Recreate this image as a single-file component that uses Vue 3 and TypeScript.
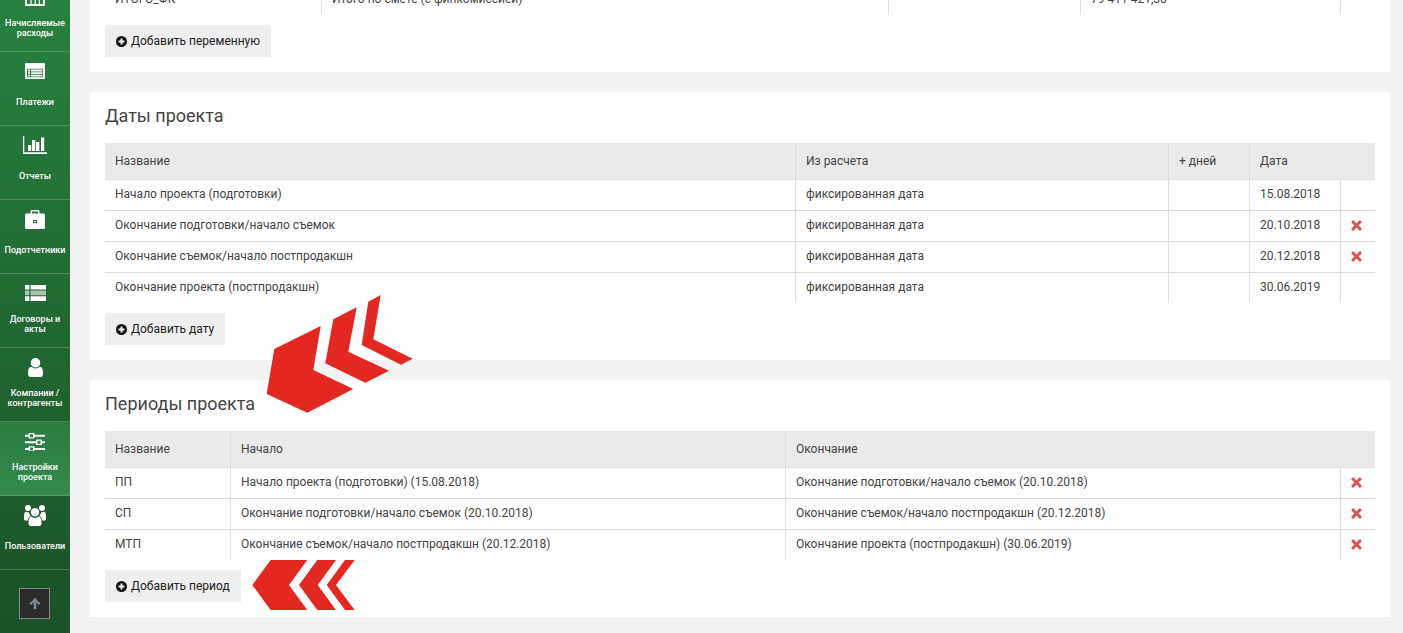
<script setup lang="ts">
interface NavItem { label: string[]; w: number; h: number; d: string; dim?: string; active?: boolean }
const nav: NavItem[] = [
  { label: ['Начисляемые', 'расходы'], w: 20, h: 18, d: 'M1 0h18a1 1 0 0 1 1 1v16a1 1 0 0 1-1 1H1a1 1 0 0 1-1-1V1a1 1 0 0 1 1-1zM2 2v3.7h3.4V2zm4.6 0v3.7h3V2zm4.2 0v3.7h3V2zm4.2 0v3.7H18V2zM2 7v3.7h3.4V7zm4.6 0v3.7h3V7zm4.2 0v3.7h3V7zm4.2 0v3.7H18V7zM2 12v4h3.4v-4zm4.6 0v4h3v-4zm4.2 0v4h3v-4zm4.2 0v4H18v-4z' },
  { label: ['Платежи'], w: 20, h: 16, d: 'M1 0h18a1 1 0 0 1 1 1v14a1 1 0 0 1-1 1H1a1 1 0 0 1-1-1V1a1 1 0 0 1 1-1zM2 5.800v8.500h16V5.800zM3 6.600h2v1.900H3zm3 0h11.300v1.900H6zM3 9.200h2v1.800H3zm3 0h11.300v1.800H6zM3 11.700h2v1.900H3zm3 0h11.300v1.900H6z' },
  { label: ['Отчеты'], w: 24, h: 18, d: 'M0 0h1.300v16.300H24V18H0zM5 9h3.200v6H5zM9 4h3.200v11H9zM13 6h3.400v9H13zM18 1.500h3.200V15H18z' },
  { label: ['Подотчетники'], w: 20, h: 19, d: 'M5.500 3.500V1.300C5.500.6 6.100 0 6.800 0h6.400c.7 0 1.300.6 1.300 1.300v2.200h4C19.300 3.500 20 4.200 20 5v12.500c0 .8-.7 1.500-1.500 1.500h-17C.7 19 0 18.300 0 17.500V5C0 4.200.7 3.500 1.500 3.500zM7 1.400v2.100h6V1.400zM8 10v3.200h4V10zm1 1h2v1.200H9z' },
  { label: ['Договоры и', 'акты'], w: 21, h: 16, d: 'M0 0h4.300v4.600H0zM5.500 0H21v4.600H5.500zM0 11.300h4.300V16H0zM5.500 11.300H21V16H5.500z', dim: 'M0 5.600h4.300v4.700H0zM5.500 5.600H21v4.700H5.500z' },
  { label: ['Компании /', 'контрагенты'], w: 15, h: 19, d: 'M7.500 0a4.800 4.800 0 1 1 0 9.600 4.800 4.800 0 0 1 0-9.600zM3.300 8.800a6 6 0 0 0 8.400 0C13.800 9 15 10.800 15 14.500V16c0 1.700-1.200 3-2.700 3H2.700C1.200 19 0 17.700 0 16v-1.500C0 10.800 1.200 9 3.300 8.800z' },
  { label: ['Настройки', 'проекта'], w: 20, h: 20, active: true, d: 'M0 3.700h3.500V2.700c0-.5.400-.8.800-.8h4.400c.4 0 .8.3.8.8v1h10.500v2H9.500v1c0 .5-.4.8-.8.8H4.300c-.4 0-.8-.3-.8-.8v-1H0zM5 3.200v3h3v-3zM0 10.300h11V9.300c0-.5.400-.8.800-.8h4.400c.4 0 .8.300.8.800v1h3v2h-3v1c0 .5-.4.800-.8.800h-4.400c-.4 0-.8-.3-.8-.8v-1H0zM12.500 9.800v3h3v-3zM0 17h3.500v-1c0-.5.400-.8.800-.8h4.400c.4 0 .8.300.8.800v1H20v2H9.500v.2c0 .5-.4.800-.8.800H4.300c-.4 0-.8-.3-.8-.8V19H0zM5 16.500v3h3v-3z' },
  { label: ['Пользователи'], w: 22, h: 21, d: 'M4 0a3 3 0 1 1 0 6 3 3 0 0 1 0-6zM18 0a3 3 0 1 1 0 6 3 3 0 0 1 0-6zM11 3a4.200 4.200 0 1 1 0 8.400 4.200 4.200 0 0 1 0-8.400zM1.800 6.500c.8.700 2 1 3 .8.300 1.500 1 2.900 2 3.700C4.700 11.700 3.800 13.300 3.800 15.500H1.500C.6 15.500 0 14.800 0 14v-3c0-2 .6-3.800 1.800-4.500zM20.200 6.500C21.400 7.200 22 9 22 11v3c0 .8-.6 1.500-1.500 1.500h-2.300c0-2.200-.9-3.800-3-4.500 1-.8 1.700-2.200 2-3.700 1 .2 2.200-.1 3-.8zM7.500 11.600c1 1 2.200 1.400 3.500 1.400s2.500-.4 3.500-1.400c2 .2 3 2.200 3 4.400v2.500c0 1.400-1 2.500-2.300 2.500H6.800c-1.300 0-2.300-1.100-2.300-2.500V16c0-2.200 1-4.200 3-4.400z' }
]
const topRows = [['ИТОГО_ФК', 'Итого по смете (с финкомиссией)', '', '79 411 421,36', '']]
const dateRows = [
  { name: 'Начало проекта (подготовки)', from: 'фиксированная дата', date: '15.08.2018', del: false },
  { name: 'Окончание подготовки/начало съемок', from: 'фиксированная дата', date: '20.10.2018', del: true },
  { name: 'Окончание съемок/начало постпродакшн', from: 'фиксированная дата', date: '20.12.2018', del: true },
  { name: 'Окончание проекта (постпродакшн)', from: 'фиксированная дата', date: '30.06.2019', del: false }
]
const periodRows = [
  ['ПП', 'Начало проекта (подготовки) (15.08.2018)', 'Окончание подготовки/начало съемок (20.10.2018)'],
  ['СП', 'Окончание подготовки/начало съемок (20.10.2018)', 'Окончание съемок/начало постпродакшн (20.12.2018)'],
  ['МТП', 'Окончание съемок/начало постпродакшн (20.12.2018)', 'Окончание проекта (постпродакшн) (30.06.2019)']
]
const plusPath = 'M5.500 0a5.500 5.500 0 1 1 0 11 5.500 5.500 0 0 1 0-11zM4.500 2.500v2h-2v2h2v2h2v-2h2v-2h-2v-2z'
const crossPath = 'M2.700.6 5.500 3.400 8.300.6a.8.8 0 0 1 1.100 0l1 1a.8.8 0 0 1 0 1.100L7.600 5.500l2.800 2.800a.8.8 0 0 1 0 1.100l-1 1a.8.8 0 0 1-1.100 0L5.500 7.600l-2.800 2.800a.8.8 0 0 1-1.100 0l-1-1a.8.8 0 0 1 0-1.100l2.800-2.800L.6 2.700a.8.8 0 0 1 0-1.100l1-1a.8.8 0 0 1 1.100 0z'
</script>

<template>
  <div class="page">
    <aside class="side">
      <div v-for="item in nav" :key="item.label[0]" class="nav" :class="{ active: item.active }">
        <div class="nav-icon">
          <svg :width="item.w" :height="item.h" :viewBox="`0 0 ${item.w} ${item.h}`">
            <path fill="#fff" fill-rule="evenodd" :d="item.d" />
            <path v-if="item.dim" fill="#fff" fill-opacity="0.6" :d="item.dim" />
          </svg>
        </div>
        <div class="nav-label"><span v-for="l in item.label" :key="l">{{ l }}</span></div>
      </div>
      <button class="up" type="button">
        <svg width="12" height="11" viewBox="0 0 12 11"><path fill="#808890" d="M6 0 11.500 5.500 10 7 7.300 4.400V11H4.700V4.400L2 7 .5 5.500z" /></svg>
      </button>
    </aside>

    <main class="main">
      <section class="card first">
        <table class="tbl">
          <colgroup><col class="t1" /><col class="t2" /><col class="t3" /><col class="t4" /><col /></colgroup>
          <tbody>
            <tr v-for="r in topRows" :key="r[0]"><td v-for="(c, i) in r" :key="i">{{ c }}</td></tr>
          </tbody>
        </table>
        <button class="add" type="button">
          <svg width="11" height="11" viewBox="0 0 11 11"><path fill="#111" fill-rule="evenodd" :d="plusPath" /></svg>
          Добавить переменную
        </button>
      </section>

      <section class="card">
        <h2>Даты проекта</h2>
        <table class="tbl">
          <colgroup><col class="d1" /><col class="d2" /><col class="d3" /><col class="d4" /><col /></colgroup>
          <thead>
            <tr><th>Название</th><th>Из расчета</th><th>+ дней</th><th colspan="2">Дата</th></tr>
          </thead>
          <tbody>
            <tr v-for="r in dateRows" :key="r.name">
              <td>{{ r.name }}</td><td>{{ r.from }}</td><td></td><td>{{ r.date }}</td>
              <td class="x"><svg v-if="r.del" width="11" height="11" viewBox="0 0 11 11"><path fill="#d9534f" :d="crossPath" /></svg></td>
            </tr>
          </tbody>
        </table>
        <button class="add" type="button">
          <svg width="11" height="11" viewBox="0 0 11 11"><path fill="#111" fill-rule="evenodd" :d="plusPath" /></svg>
          Добавить дату
        </button>
      </section>

      <section class="card">
        <h2>Периоды проекта</h2>
        <table class="tbl">
          <colgroup><col class="p1" /><col class="p2" /><col class="p3" /><col /></colgroup>
          <thead>
            <tr><th>Название</th><th>Начало</th><th colspan="2">Окончание</th></tr>
          </thead>
          <tbody>
            <tr v-for="r in periodRows" :key="r[0]">
              <td v-for="c in r" :key="c">{{ c }}</td>
              <td class="x"><svg width="11" height="11" viewBox="0 0 11 11"><path fill="#d9534f" :d="crossPath" /></svg></td>
            </tr>
          </tbody>
        </table>
        <button class="add" type="button">
          <svg width="11" height="11" viewBox="0 0 11 11"><path fill="#111" fill-rule="evenodd" :d="plusPath" /></svg>
          Добавить период
        </button>
      </section>
    </main>

    <svg class="arrows" width="1403" height="633" viewBox="0 0 1403 633">
      <g fill="#e52722">
        <polygon points="274.300,349 320.700,326 313.300,370 353.300,389 307.300,412.700 266.700,394" />
        <polygon points="333.300,319.300 356.700,307.300 348.300,351.700 389,370.700 365.300,382.700 325.300,363.300" />
        <polygon points="368.300,301.700 380.700,295 373.300,339.300 412.700,358.700 401,364.700 361.700,345" />
        <polygon points="252.300,585 270.700,560 307.300,560 289,585 307.300,610 270.700,610" />
        <polygon points="299,585 317.300,560 336,560 317.700,585 336,610 317.300,610" />
        <polygon points="326.700,585 345,560 354.700,560 336,585 354.700,610 345,610" />
      </g>
    </svg>
  </div>
</template>

<style scoped>
.page {
  position: relative;
  display: flex;
  width: 1403px;
  height: 633px;
  overflow: hidden;
  background: #f3f3f3;
  font-family: Roboto, "Liberation Sans", sans-serif;
  font-size: 12px;
  color: #444;
}
.side {
  flex: none;
  width: 70px;
  height: 655px;
  margin-top: -22px;
  background: linear-gradient(180deg, #288240 0%, #1a5229 100%);
  display: flex;
  flex-direction: column;
}
.nav {
  box-sizing: border-box;
  flex: none;
  height: 74px;
  padding-top: 6px;
  border-bottom: 1px solid rgba(255, 255, 255, 0.2);
  text-align: center;
  color: #fff;
}
.nav.active { background: linear-gradient(180deg, #2b7c42, #348a4d); }
.nav-icon {
  height: 26px;
  display: flex;
  align-items: center;
  justify-content: center;
}
.nav-label {
  height: 24px;
  margin-top: 6px;
  display: flex;
  flex-direction: column;
  justify-content: center;
  font-size: 9px;
  font-weight: 500;
  line-height: 10.5px;
  white-space: nowrap;
}
.up {
  box-sizing: border-box;
  width: 31px;
  height: 31px;
  margin: 18px 0 0 19px;
  padding: 0;
  background: #2b2b2b;
  border: 1px solid #888;
  display: flex;
  align-items: center;
  justify-content: center;
}
.main {
  flex: none;
  width: 1300px;
  margin-left: 20px;
}
.card {
  box-sizing: border-box;
  background: #fff;
  padding: 15px;
  margin-bottom: 20px;
}
.card.first { margin-top: -15px; padding-top: 0; }
h2 {
  margin: 0 0 18px;
  font-size: 18px;
  font-weight: 400;
  line-height: 18px;
  color: #444;
}
.tbl {
  width: 1270px;
  table-layout: fixed;
  border-collapse: separate;
  border-spacing: 0;
}
.t1 { width: 216px; }
.t2 { width: 567px; }
.t3 { width: 192px; }
.t4 { width: 260px; }
.d1 { width: 690px; }
.d2 { width: 373px; }
.d3 { width: 81px; }
.d4 { width: 91px; }
.p1 { width: 125px; }
.p2 { width: 555px; }
.p3 { width: 555px; }
th, td {
  box-sizing: content-box;
  text-align: left;
  font-weight: 400;
  border-left: 1px solid #ddd;
  white-space: nowrap;
  overflow: hidden;
}
th:first-child, td:first-child { border-left: 0; }
th {
  height: 36px;
  padding: 0 10px;
  background: #eaeaea;
  border-bottom: 1px solid #ddd;
}
td {
  height: 28px;
  padding: 0 10px 2px;
  border-bottom: 1px solid #ddd;
}
tr:last-child td { border-bottom: 0; }
.x { padding: 0 0 2px 10px; }
.x svg { display: block; margin-top: 1px; }
.add {
  display: flex;
  align-items: center;
  gap: 4px;
  height: 32px;
  margin-top: 10px;
  padding: 0 11px;
  border: 0;
  background: #efefef;
  font: inherit;
  color: #222;
}
.arrows {
  position: absolute;
  left: 0;
  top: 0;
  pointer-events: none;
}
</style>
